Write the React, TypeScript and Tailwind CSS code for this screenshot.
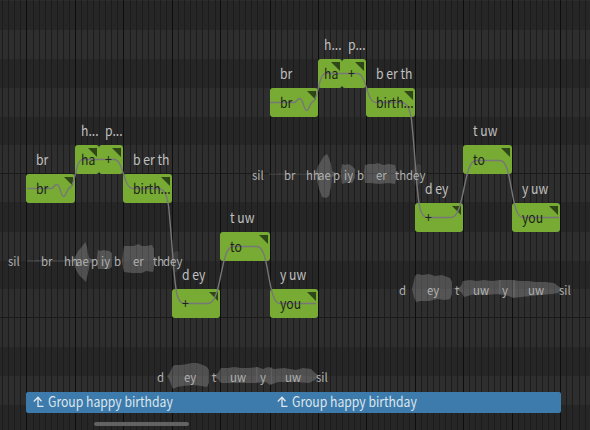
import React from "react";

const rows: [number, number, boolean][] = [
  [0, 1, false], [1, 29, true], [30, 29, false], [59, 29, true], [88, 29, false], [117, 28, true],
  [145, 57, false], [202, 30, true], [232, 29, false], [261, 28, true], [289, 58, false],
  [347, 29, true], [376, 29, false], [405, 25, true],
];

const majors = [26, 75, 123, 172, 220, 270, 318, 366, 415, 463, 512, 560];
const minors = Array.from({ length: 98 }, (_, i) => i - 4)
  .filter((i) => i % 8 !== 0)
  .map((i) => Math.round(26.45 + i * 6.067));

type Note = { x: number; y: number; w: number; text: string; ph: string };

const notes: Note[] = [
  { x: 26, y: 174, w: 49, text: "br", ph: "br" },
  { x: 75, y: 145, w: 24, text: "ha", ph: "h..." },
  { x: 99, y: 145, w: 24, text: "+", ph: "p..." },
  { x: 123, y: 174, w: 49, text: "birth...", ph: "b er th" },
  { x: 172, y: 289, w: 48, text: "+", ph: "d ey" },
  { x: 220, y: 232, w: 50, text: "to", ph: "t uw" },
  { x: 270, y: 289, w: 48, text: "you", ph: "y uw" },
  { x: 270, y: 88, w: 48, text: "br", ph: "br" },
  { x: 318, y: 59, w: 24, text: "ha", ph: "h..." },
  { x: 342, y: 59, w: 24, text: "+", ph: "p..." },
  { x: 366, y: 88, w: 49, text: "birth...", ph: "b er th" },
  { x: 415, y: 203, w: 48, text: "+", ph: "d ey" },
  { x: 463, y: 145, w: 49, text: "to", ph: "t uw" },
  { x: 512, y: 203, w: 48, text: "you", ph: "y uw" },
];

const phonemes: [number, number, string][] = [
  [8, 261, "sil"], [41, 261, "br"], [64, 261, "hh"], [76, 261, "ae"], [91, 261, "p"], [101, 261, "iy"],
  [114, 261, "b"], [133, 261, "er"], [153, 261, "th"], [163, 261, "dey"],
  [157, 377, "d"], [184, 377, "ey"], [212, 377, "t"], [230, 377, "uw"], [260, 377, "y"], [285, 377, "uw"], [316, 377, "sil"],
  [252, 175, "sil"], [284, 175, "br"], [306, 175, "hh"], [318, 175, "ae"], [333, 175, "p"], [344, 175, "iy"],
  [357, 175, "b"], [376, 175, "er"], [395, 175, "th"], [406, 175, "dey"],
  [399, 290, "d"], [427, 290, "ey"], [455, 290, "t"], [473, 290, "uw"], [502, 290, "y"], [528, 290, "uw"], [559, 290, "sil"],
];

function NoteBlock({ n }: { n: Note }) {
  return (
    <>
      <span className="absolute origin-left scale-x-[.87] text-sm whitespace-nowrap text-[#c0c0c0]" style={{ left: n.x + (n.w < 30 ? 6 : 10), top: n.y - 25 }}>
        {n.ph}
      </span>
      <div className="absolute h-[29px] rounded-[3px] bg-[#77ab34]" style={{ left: n.x, top: n.y, width: n.w }}>
        <i className="absolute top-[3px] right-[2px] size-[9px] bg-[#2f4716] [clip-path:polygon(0_0,100%_0,100%_100%)]" />
      </div>
    </>
  );
}

function NoteText({ n }: { n: Note }) {
  return (
    <span className="absolute origin-left scale-x-[.87] text-sm whitespace-nowrap text-[#1d2418]" style={{ left: n.x + (n.w < 30 ? 6 : 10), top: n.y + 4 }}>
      {n.text}
    </span>
  );
}

function Curve({ x, y }: { x: number; y: number }) {
  return (
    <path
      transform={`translate(${x} ${y})`}
      d="M0 0H24C27 0 27-4 30-4C33-4 34 8 36.500 8C39 8 40 0 43-1C49-4 48-29 56-29H87C97-29 96 0 106 0H131C138 0 140 8 141.500 17C144 40 145 60 147 83C149 104 150 115 158 115H181C195 115 193 58 206 58H230C243 58 240 115 253 115H289"
      fill="none" stroke="#777777" strokeWidth="1.4"
    />
  );
}

function PhraseWave({ x, y, children }: { x: number; y: number; children: React.ReactNode }) {
  return (
    <g transform={`translate(${x} ${y})`} fill="#a0a0a0" fillOpacity=".34">
      <path d="M0-.5H9L10-1H11L12-.5H48V.5H0Z" />
      {children}
      <path d="M128-.5H143L146-9L147-8L149-10L152-9V9L147 12L145 8L143 .5H128Z" fillOpacity=".15" />
    </g>
  );
}

function TailWave({ x, y, children }: { x: number; y: number; children: React.ReactNode }) {
  return (
    <g transform={`translate(${x} ${y})`} fill="#a0a0a0" fillOpacity=".34">
      {children}
      <path d="M85-9V6M99-9V8" stroke="#8a8a8a" strokeOpacity=".5" />
    </g>
  );
}

function Group({ className }: { className: string }) {
  return (
    <div className={`${className} flex h-full items-center gap-[3px]`}>
      <svg width="12" height="14" viewBox="0 0 12 14" fill="none" stroke="#e0e8ee" strokeWidth="1.3">
        <path d="M5 1V10.300H10.500M.8 5.500L5 1.200L8.500 5.200" />
      </svg>
      <span className="-mt-[3px] origin-left scale-x-[.87]">Group happy birthday</span>
    </div>
  );
}

export default function App() {
  return (
    <main className="relative flex h-[430px] w-[590px] flex-col overflow-hidden bg-[#2e2e2e] font-['Noto_Sans_CJK_SC',sans-serif]">
      <svg className="absolute inset-0" width="590" height="430" shapeRendering="crispEdges">
        {rows.map(([y, h, dark]) => <rect key={y} y={y} width="590" height={h} fill={dark ? "#262626" : "#2e2e2e"} />)}
        {minors.map((x) => <rect key={x} x={x} width="1" height="430" fill="#1c1c1c" />)}
        <path d="M0 173.5H590M0 317.5H590" stroke="#1a1a1a" />
        {majors.map((x) => <rect key={x} x={x} width="1" height="430" fill="#0d0d0d" />)}
      </svg>
      {notes.map((n, i) => <NoteBlock key={i} n={n} />)}
      <svg className="absolute inset-0" width="590" height="430">
        <PhraseWave x={27} y={261}>
          <path d="M47-2L49-6L51-10L54-13L56-16L58.5-19L60-14L61-7L62-3L67-1V1L63 2L61 12L59 21L56 18L52 14L49 9L47 3Z" />
          <path d="M70-3L71-11L74-10L76-11L82-10L85-8V6L82 8H76L71 8L70 2Z" />
          <path d="M95 0L96-8L97-15L103-15L107-15L111-17L115-15L119-15L125-16L127-12L127-7V7L126 11L119 10L115 12H105L97 11L96 7Z" />
        </PhraseWave>
        <PhraseWave x={269} y={174}>
          <path d="M47-2L49-8L52-13L55-18L58-20L60-16L62-10L63-3L67-1V1L63 3L62 13L60 22L57 24L53 23L50 15L48 6Z" />
          <path d="M72-3L73-10L76-9L79-10L83-8L86-5V4L83 9L79 8L73 10L72 2Z" />
          <path d="M95-1L96-9L100-10L106-10L109-11L114-9L120-10L126-9L127-5V5L126 10L119 9L110 10L101 9L96 9Z" />
        </PhraseWave>
        <TailWave x={172} y={376}>
          <path d="M-5 0L-3-2L-1-6L1-10L3-11L9-11L15-12L20-13L25-13L31-11L35-9L37-6V7L35 11L29 10L21 9L11 10L5 11L1 13L-1 8L-3 3Z" />
          <path d="M37-.5L43-1L46-3L49-8L56-8L62-9L69-8L77-8L85-9L91-7L96-9L102-7L112-8L124-6L131-8L139-7L143-3L146-1V1L143 4L137 7L125 6L116 6L106 6L98 9L94 6L84 7H49L46 3L42 1Z" />
        </TailWave>
        <TailWave x={415} y={289}>
          <path d="M-3 0L-2-4L0-13L2-15L8-14L14-15L20-13L27-14L35-11L37-7V5L35 10L30 11L22 10L14 12L5 12L1 13L-1 8Z" />
          <path d="M37-.5L43-1L46-3L48-8L55-9L62-8L69-9L77-8L85-9H97L105-8L114-8L120-7L131-7L139-6L143-3L146-1V1L143 4L137 5L125 6L116 7L106 8L98 9L94 7L84 5L70 6L60 5L49 8L46 3L42 1Z" />
        </TailWave>
        <Curve x={27} y={188.5} />
        <Curve x={270} y={102.5} />
      </svg>
      {notes.map((n, i) => <NoteText key={i} n={n} />)}
      {phonemes.map(([x, y, t], i) => (
        <span key={i} className="absolute origin-left scale-x-95 text-xs whitespace-nowrap text-[#b0b0b0]" style={{ left: x, top: y - 8 }}>{t}</span>
      ))}
      <div className="relative mt-[392px] ml-[26px] flex h-[21px] w-[535px] shrink-0 items-center rounded-[2px] bg-[#3c7bab] text-sm whitespace-nowrap text-[#dde6ec]">
        <Group className="w-[244px] shrink-0 pl-[7px]" />
        <Group className="pl-[7px]" />
      </div>
      <div className="relative mt-[9px] ml-[94px] h-[4px] w-[95px] shrink-0 rounded-full bg-[#626262]" />
    </main>
  );
}
